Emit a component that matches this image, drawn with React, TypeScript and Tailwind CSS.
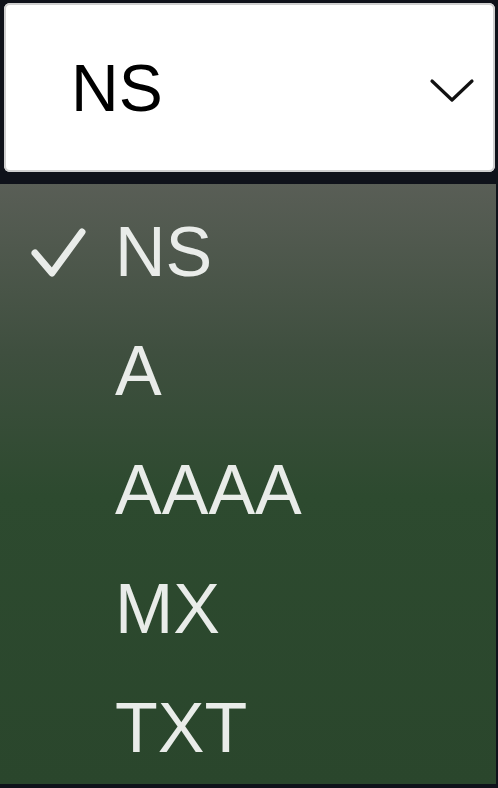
const items = ["NS", "A", "AAAA", "MX", "TXT"];

const Check = () => (
  <svg width="56" height="52" viewBox="0 0 56 52" className="block">
    <path d="M4 26 L21 46 L51 5" fill="none" stroke="#e9ece9" strokeWidth="7" strokeLinecap="round" strokeLinejoin="round" />
  </svg>
);

const Chevron = () => (
  <svg width="46" height="26" viewBox="0 0 46 26" className="block">
    <path d="M3 3 L23 22 L43 3" fill="none" stroke="#111" strokeWidth="3.2" strokeLinecap="round" strokeLinejoin="round" />
  </svg>
);

export default function App() {
  const selected = "NS";
  return (
    <div className="w-[498px] h-[788px] bg-[#0f121a] overflow-hidden flex flex-col font-['Liberation_Sans',Arial,sans-serif]">
      {/* SELECT */}
      <div className="pt-[3px] pl-[4px] pr-[3px]">
        <div className="h-[169px] bg-white rounded-[6px] ring-2 ring-inset ring-[#cfcfcf] flex items-center justify-between pl-[67px] pr-[20px]">
          <span className="text-[66px] leading-none text-black">NS</span>
          <div className="mt-[7px]">
            <Chevron />
          </div>
        </div>
      </div>
      {/* MENU */}
      <div className="mt-[12px] mr-[2px] h-[600px] overflow-hidden pt-[9px] bg-[linear-gradient(180deg,#595e56_0%,#3f4f3f_28%,#2d4a2f_52%,#2a462c_100%)]">
        {items.map((item) => (
          <div key={item} className="h-[119px] flex items-center">
            <div className="w-[115px] pl-[31px] flex items-center">
              {item === selected && <Check />}
            </div>
            <span className="text-[70px] leading-[119px] text-[#e9ece9]">{item}</span>
          </div>
        ))}
      </div>
    </div>
  );
}
